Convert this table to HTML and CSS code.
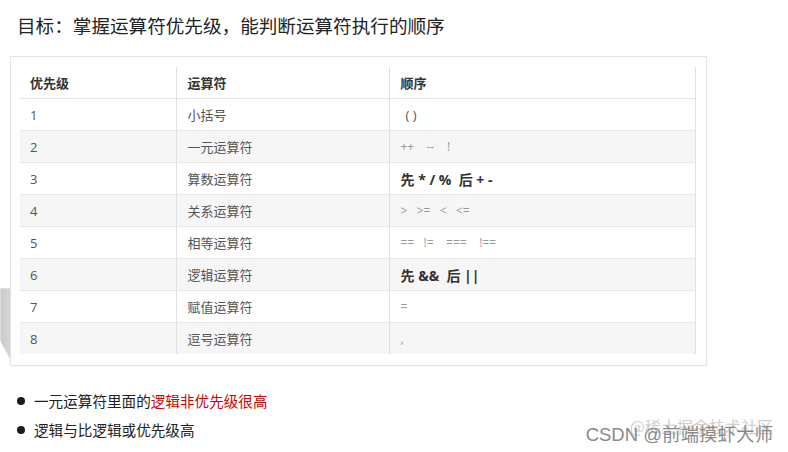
FILE: index.html
```html
<!DOCTYPE html>
<html lang="zh-CN">
<head>
<meta charset="utf-8">
<title>运算符优先级</title>
<link rel="stylesheet" href="styles.css">
</head>
<body>
<div class="page">
  <h1 class="title">目标：掌握运算符优先级，能判断运算符执行的顺序</h1>
  <div class="card-wrap">
    <div class="shade"></div>
    <div class="card">
      <table class="ops">
        <colgroup>
          <col class="c1"><col class="c2"><col class="c3">
        </colgroup>
        <thead>
          <tr><th>优先级</th><th>运算符</th><th>顺序</th></tr>
        </thead>
        <tbody>
          <tr><td>1</td><td>小括号</td><td class="paren">( )</td></tr>
          <tr class="alt"><td>2</td><td>一元运算符</td><td class="sym">++&nbsp;&nbsp;&nbsp;&nbsp;--&nbsp;&nbsp;&nbsp;&nbsp;!</td></tr>
          <tr><td>3</td><td>算数运算符</td><td class="strong">先 * / %&nbsp; 后 + -</td></tr>
          <tr class="alt"><td>4</td><td>关系运算符</td><td class="sym">&gt;&nbsp;&nbsp;&nbsp;&gt;=&nbsp;&nbsp;&nbsp;&lt;&nbsp;&nbsp;&nbsp;&lt;=</td></tr>
          <tr><td>5</td><td>相等运算符</td><td class="sym">==&nbsp;&nbsp;&nbsp;!=&nbsp;&nbsp;&nbsp;&nbsp;===&nbsp;&nbsp;&nbsp;&nbsp;!==</td></tr>
          <tr class="alt"><td>6</td><td>逻辑运算符</td><td class="strong">先 &amp;&amp;&nbsp; 后 ||</td></tr>
          <tr><td>7</td><td>赋值运算符</td><td class="sym">=</td></tr>
          <tr class="alt"><td>8</td><td>逗号运算符</td><td class="sym">,</td></tr>
        </tbody>
      </table>
    </div>
  </div>
  <ul class="notes">
    <li>一元运算符里面的<span class="red">逻辑非优先级很高</span></li>
    <li>逻辑与比逻辑或优先级高</li>
  </ul>
  <div class="wm">
    <span class="wm-a">@稀土掘金技术社区</span>
    <span class="wm-b">CSDN @前端摸虾大师</span>
  </div>
</div>
</body>
</html>
```
FILE: styles.css
```css
html, body {
  margin: 0;
  padding: 0;
  background: #ffffff;
}
.page {
  position: relative;
  width: 788px;
  height: 452px;
  overflow: hidden;
  font-family: "Noto Sans CJK SC", "Noto Sans", sans-serif;
}
.title {
  margin: 0;
  padding: 11px 0 0 17px;
  height: 56px;
  box-sizing: border-box;
  font-size: 18.6px;
  line-height: 28px;
  font-weight: 400;
  color: #222;
}
.card-wrap {
  position: relative;
  margin-left: 10px;
  width: 697px;
}
.shade {
  position: absolute;
  left: -10px;
  top: 232px;
  width: 16px;
  height: 70px;
  background: linear-gradient(90deg, #c8c8c8 0%, #d6d6d6 60%, #e8e8e8 100%);
  clip-path: polygon(0 0, 100% 0, 100% 100%, 60% 100%, 0 75%);
  filter: blur(1px);
  z-index: 0;
}
.card {
  position: relative;
  z-index: 1;
  background: #fff;
  border: 1px solid #e4e4e4;
  padding: 10px 10px 11px 9px;
  box-shadow: 0 1px 2px rgba(0,0,0,0.04);
}
.ops {
  border-collapse: collapse;
  width: 675px;
  table-layout: fixed;
  font-family: "Open Sans", "Noto Sans CJK SC", sans-serif;
  font-size: 13px;
  color: #555;
}
.c1 { width: 156px; }
.c2 { width: 213px; }
.c3 { width: 306px; }
.ops th {
  text-align: left;
  font-weight: 700;
  color: #333;
  height: 31px;
  padding: 0 0 0 11px;
  border-bottom: 1px solid #e2e2e2;
  border-right: 1px solid #e0e0e0;
}
.ops td {
  height: 31px;
  padding: 0 0 0 11px;
  border-bottom: 1px solid #e8e8e8;
  border-right: 1px solid #e0e0e0;
  white-space: nowrap;
}
.ops th:first-child, .ops td:first-child {
  padding-left: 10px;
}
.ops tbody tr:last-child td {
  border-bottom: none;
}
.ops tr.alt td {
  background: #f6f6f6;
}
.ops td.paren {
  padding-left: 16px;
  color: #555;
}
.ops td.sym {
  font-size: 12px;
  color: #999;
}
.ops td.strong {
  font-size: 14px;
  font-weight: 700;
  color: #333;
}
.notes {
  list-style: none;
  margin: 20px 0 0 0;
  padding: 0 0 0 16px;
  font-size: 14.6px;
  color: #222;
}
.notes li {
  position: relative;
  height: 29px;
  line-height: 29px;
  padding-left: 18px;
}
.notes li::before {
  content: "";
  position: absolute;
  left: 1px;
  top: 11px;
  width: 8px;
  height: 8px;
  border-radius: 50%;
  background: #1b1b24;
}
.red {
  color: #d40000;
}
.wm {
  position: absolute;
  right: 15px;
  top: 416px;
  width: 200px;
  height: 34px;
}
.wm-a {
  position: absolute;
  right: 0;
  top: 0;
  line-height: 20px;
  font-size: 16px;
  color: #d0d0d0;
  white-space: nowrap;
}
.wm-b {
  position: absolute;
  right: 0;
  top: 8px;
  line-height: 22px;
  font-family: "Liberation Sans", "Noto Sans CJK SC", sans-serif;
  font-size: 18.5px;
  color: #8a8a8a;
  white-space: nowrap;
}
```
